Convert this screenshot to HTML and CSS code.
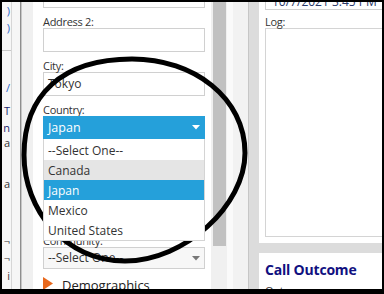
FILE: index.html
```html
<!DOCTYPE html>
<html lang="en">
<head>
    <meta charset="UTF-8">
    <title>Contact Form</title>
    <link rel="stylesheet" href="styles.css">
</head>
<body>
    <div class="shot">
        <div class="frame">
            <div class="nav">
                <div class="frag blue">)</div>
                <div class="frag blue">)</div>
                <div class="divider"></div>
                <div class="frag blue f3">/</div>
                <div class="frag navy f4">T</div>
                <div class="frag navy">n</div>
                <div class="frag f6">a</div>
                <div class="frag f7">a</div>
                <div class="frag f8">¬</div>
                <div class="frag">¬</div>
                <div class="frag f10">i</div>
            </div>
            <div class="split"></div>

            <div class="form">
                <div class="form-inner">
                    <div class="field"></div>
                    <label class="label">Address 2:</label>
                    <div class="field"></div>
                    <label class="label">City:</label>
                    <div class="field">Tokyo</div>
                    <label class="label">Country:</label>
                    <div class="select-wrap">
                        <div class="select active">
                            <span>Japan</span>
                            <svg width="8" height="5" viewBox="0 0 8 5"><polygon points="0,0 8,0 4,4.5" fill="#fff"/></svg>
                        </div>
                        <ul class="options">
                            <li>--Select One--</li>
                            <li class="hover">Canada</li>
                            <li class="picked">Japan</li>
                            <li>Mexico</li>
                            <li>United States</li>
                        </ul>
                    </div>
                    <!-- fields hidden under the open list -->
                    <div class="label"></div>
                    <div class="field"></div>
                    <div class="label"></div>
                    <div class="field"></div>
                    <label class="label">Community:</label>
                    <div class="select">
                        <span>--Select One--</span>
                        <svg width="8" height="5" viewBox="0 0 8 5"><polygon points="0,0 8,0 4,4.5" fill="#777"/></svg>
                    </div>
                    <div class="section">
                        <svg width="10" height="13" viewBox="0 0 10 13"><polygon points="0,0 10,6.5 0,13" fill="#e8681c"/></svg>
                        <span>Demographics</span>
                    </div>
                </div>
            </div>

            <div class="scroll"><div class="thumb"></div></div>
            <div class="gutter"></div>

            <div class="right">
                <div class="card log">
                    <div class="stamp">10/7/2021 3:45 PM</div>
                    <label class="label log-label">Log:</label>
                    <div class="textarea"></div>
                </div>
                <div class="card outcome">
                    <h3>Call Outcome</h3>
                    <label class="label">Outcome:</label>
                </div>
            </div>
        </div>

        <svg class="annot" width="384" height="294" viewBox="0 0 384 294">
            <path d="M132,59 C194,59 245,98 245,153 C245,205 185,261 125,261 C65,261 24,210 24,155 C24,95 62,59 132,59 Z" fill="none" stroke="#000" stroke-width="5"/>
        </svg>
    </div>
</body>
</html>
```

FILE: styles.css
```css
* {
    box-sizing: border-box;
}
body {
    margin: 0;
    font-family: "Open Sans", Arial, sans-serif;
    color: #333;
}
.shot {
    position: relative;
    width: 384px;
    height: 294px;
}
.frame {
    width: 384px;
    height: 294px;
    border: 2px solid #000;
    border-bottom-width: 5px;
    display: flex;
    overflow: hidden;
    background: #fff;
}

/* cut off left panel */
.nav {
    width: 9px;
    flex-shrink: 0;
    background: #f7f7f7;
    overflow: hidden;
}
.frag {
    height: 17px;
    line-height: 17px;
    font-size: 11px;
    text-align: right;
    padding-right: 1px;
    color: #333;
}
.frag.blue { color: #2a64c8; }
.frag.navy { color: #1a1f6e; }
.divider {
    height: 15px;
    border-bottom: 1px solid #c8c8c8;
}
.f3 { margin-top: 28px; }
.f4 { margin-top: 6px; }
.f6 { margin-top: -2px; }
.f7 { margin-top: 24px; }
.f8 { margin-top: 40px; }
.f10 { margin-top: 1px; }

.split {
    width: 22px;
    flex-shrink: 0;
    background: linear-gradient(to right, #d6d6d6 0 1px, #f6f6f6 1px 9px, #8e8e8e 9px 10px, #c6c6c6 10px 11px, #f0f0f0 11px);
}

/* form column */
.form {
    width: 178px;
    flex-shrink: 0;
    padding-left: 10px;
    overflow: hidden;
}
.form-inner {
    width: 162px;
    margin-top: -18px;
}
.label {
    display: block;
    height: 20px;
    padding-top: 7px;
    line-height: 13px;
    font-size: 11px;
    letter-spacing: -0.3px;
    color: #333;
}
.field {
    height: 24px;
    border: 1px solid #d0d0d0;
    padding-left: 4px;
    font-size: 12px;
    line-height: 22px;
    color: #333;
}
.select-wrap {
    position: relative;
}
.select {
    height: 22px;
    border: 1px solid #d0d0d0;
    background: #f7f7f7;
    padding: 0 4px 0 4px;
    display: flex;
    justify-content: space-between;
    align-items: center;
    font-size: 12px;
    line-height: 20px;
    color: #333;
}
.select.active {
    height: 23px;
    background: #25a0da;
    border-color: #25a0da;
    color: #fff;
    font-size: 12.5px;
}
.options {
    position: absolute;
    top: 100%;
    left: 0;
    width: 162px;
    margin: 0;
    padding: 0;
    list-style: none;
    background: #fff;
    border: 1px solid #d4d4d4;
    border-top: none;
    z-index: 2;
}
.options li {
    height: 20px;
    line-height: 22px;
    padding-left: 4px;
    font-size: 12px;
    color: #333;
}
.options li:first-child {
    margin-top: 1px;
}
.options li.hover {
    background: #e5e5e5;
}
.options li.picked {
    background: #25a0da;
    color: #fff;
}
.section {
    display: flex;
    align-items: flex-start;
    gap: 9px;
    margin-top: 8px;
    font-size: 13px;
    line-height: 16px;
    color: #222;
}

.scroll {
    width: 16px;
    flex-shrink: 0;
    background: #f0f0f0;
}
.thumb {
    margin-left: 2px;
    width: 13px;
    height: 244px;
    background: #c1c1c1;
}
.gutter {
    width: 22px;
    flex-shrink: 0;
    background: linear-gradient(to right, #fafafa 0 6px, #f2f2f2 6px 21px, #c6c6c6 21px);
}

/* right column */
.right {
    width: 133px;
    flex-shrink: 0;
    background: #dcdcdc;
    padding-left: 10px;
    display: flex;
    flex-direction: column;
    gap: 10px;
}
.card {
    background: #fff;
    padding-left: 6px;
    overflow: hidden;
}
.card.log {
    height: 241px;
    flex-shrink: 0;
}
.card.outcome {
    flex: 1;
}
.stamp {
    width: 140px;
    height: 24px;
    margin-top: -16px;
    border: 1px solid #d0d0d0;
    padding: 7px 6px 0;
    font-size: 12px;
    line-height: 16px;
    white-space: nowrap;
    color: #2a3a6a;
}
.log-label {
    height: 18px;
    padding-top: 5px;
}
.textarea {
    width: 140px;
    height: 209px;
    border: 1px solid #d4d4d4;
}
h3 {
    margin: 0;
    padding-top: 7px;
    font-size: 14px;
    line-height: 20px;
    font-weight: 700;
    letter-spacing: -0.2px;
    color: #101080;
}
.outcome .label {
    padding-top: 4px;
}

.annot {
    position: absolute;
    top: 0;
    left: 0;
}
```
